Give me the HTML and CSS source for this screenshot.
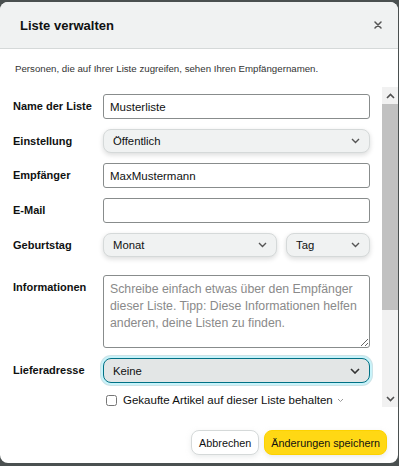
FILE: index.html
```html
<!DOCTYPE html>
<html lang="de">
<head>
    <meta charset="UTF-8">
    <meta name="viewport" content="width=device-width, initial-scale=1.0">
    <title>Liste verwalten</title>
    <link rel="stylesheet" href="styles.css">
</head>
<body>
    <div class="modal">
        <div class="modal-header">
            <h2>Liste verwalten</h2>
            <button type="button" class="btn-close" aria-label="Schließen">
                <svg width="8" height="8" viewBox="0 0 8 8"><path d="M1 1L7 7M7 1L1 7" stroke="#555" stroke-width="1.5" stroke-linecap="round"/></svg>
            </button>
        </div>
        <p class="modal-note">Personen, die auf Ihrer Liste zugreifen, sehen Ihren Empfängernamen.</p>

        <div class="modal-body">
            <form id="listForm">
                <div class="form-row">
                    <label for="listName">Name der Liste</label>
                    <input type="text" id="listName" class="field" value="Musterliste">
                </div>
                <div class="form-row">
                    <label>Einstellung</label>
                    <div class="dropdown">
                        <span>Öffentlich</span>
                        <svg class="chevron" width="9" height="6" viewBox="0 0 9 6"><path d="M1 1l3.5 3.5L8 1" fill="none" stroke="#555" stroke-width="1.4"/></svg>
                    </div>
                </div>
                <div class="form-row">
                    <label for="recipient">Empfänger</label>
                    <input type="text" id="recipient" class="field" value="MaxMustermann">
                </div>
                <div class="form-row">
                    <label for="email">E-Mail</label>
                    <input type="text" id="email" class="field">
                </div>
                <div class="form-row form-row-wide">
                    <label>Geburtstag</label>
                    <div class="date-group">
                        <div class="dropdown">
                            <span>Monat</span>
                            <svg class="chevron" width="9" height="6" viewBox="0 0 9 6"><path d="M1 1l3.5 3.5L8 1" fill="none" stroke="#555" stroke-width="1.4"/></svg>
                        </div>
                        <div class="dropdown">
                            <span>Tag</span>
                            <svg class="chevron" width="9" height="6" viewBox="0 0 9 6"><path d="M1 1l3.5 3.5L8 1" fill="none" stroke="#555" stroke-width="1.4"/></svg>
                        </div>
                    </div>
                </div>
                <div class="form-row">
                    <label for="info">Informationen</label>
                    <textarea id="info" class="field field-area" placeholder="Schreibe einfach etwas über den Empfänger dieser Liste. Tipp: Diese Informationen helfen anderen, deine Listen zu finden."></textarea>
                </div>
                <div class="form-row form-row-tight">
                    <label>Lieferadresse</label>
                    <div class="dropdown dropdown-focus">
                        <span>Keine</span>
                        <svg class="chevron" width="10" height="6" viewBox="0 0 10 6"><path d="M1 1l4 4 4-4" fill="none" stroke="#333" stroke-width="1.6"/></svg>
                    </div>
                </div>
                <div class="form-row">
                    <span></span>
                    <div class="check">
                        <input type="checkbox" id="keepItems">
                        <label for="keepItems">Gekaufte Artikel auf dieser Liste behalten</label>
                        <svg width="7" height="5" viewBox="0 0 7 5"><path d="M1 1l2.5 2.5L6 1" fill="none" stroke="#999" stroke-width="1"/></svg>
                    </div>
                </div>
            </form>

            <!-- Scrollleiste, Inhalt läuft weiter nach unten -->
            <div class="scrollbar">
                <div class="scroll-btn">
                    <svg width="9" height="6" viewBox="0 0 9 6"><path d="M1 5l3.5-3.5L8 5" fill="none" stroke="#505050" stroke-width="1.6"/></svg>
                </div>
                <div class="scroll-thumb"></div>
                <div class="scroll-track"></div>
                <div class="scroll-btn">
                    <svg width="9" height="6" viewBox="0 0 9 6"><path d="M1 1l3.5 3.5L8 1" fill="none" stroke="#505050" stroke-width="1.6"/></svg>
                </div>
            </div>
        </div>

        <div class="modal-footer">
            <button type="button" class="btn btn-cancel">Abbrechen</button>
            <button type="submit" form="listForm" class="btn btn-save">Änderungen speichern</button>
        </div>
    </div>
</body>
</html>
```

FILE: styles.css
```css
:root {
    --text-color: #0f1111;
    --border-color: #888c8c;
    --header-bg: #f0f2f2;
    --accent-yellow: #ffd814;
    --focus-color: #007185;
}

body {
    font-family: 'Liberation Sans', Arial, sans-serif;
    margin: 0;
    padding: 2px 0 0;
    background-color: #4a5050;
    color: var(--text-color);
}

.modal {
    width: 398px;
    height: 461px;
    background: white;
    border-radius: 8px;
    overflow: hidden;
    display: flex;
    flex-direction: column;
}

.modal-header {
    display: flex;
    justify-content: space-between;
    align-items: center;
    height: 46px;
    padding: 0 14px 0 20px;
    background-color: var(--header-bg);
    border-bottom: 1px solid #d5d9d9;
}

.modal-header h2 {
    margin: 0;
    font-size: 13px;
    font-weight: bold;
}

.btn-close {
    border: none;
    background: none;
    padding: 2px;
    display: flex;
    cursor: pointer;
}

.modal-note {
    margin: 0;
    padding: 14px 15px 0;
    height: 24px;
    font-size: 9.7px;
    color: #333;
}

.modal-body {
    height: 320px;
    display: flex;
    overflow: hidden;
}

#listForm {
    flex: 1;
    padding: 7px 12px 0 13px;
}

.form-row {
    display: grid;
    grid-template-columns: 90px 1fr;
    margin-bottom: 10px;
}

.form-row-wide {
    margin-bottom: 18px;
}

.form-row-tight {
    margin-bottom: 11px;
}

.form-row > label {
    font-size: 11px;
    font-weight: bold;
    padding-top: 6px;
}

.field {
    height: 25px;
    box-sizing: border-box;
    border: 1px solid var(--border-color);
    border-radius: 3px;
    padding: 0 6px;
    font-family: inherit;
    font-size: 11.5px;
    color: var(--text-color);
}

.field-area {
    height: 73px;
    padding: 5px 6px;
    font-size: 12.3px;
    line-height: 17px;
    resize: vertical;
}

.field-area::placeholder {
    color: #8a8a8a;
}

.dropdown {
    height: 24px;
    box-sizing: border-box;
    display: flex;
    justify-content: space-between;
    align-items: center;
    padding: 0 9px;
    background-color: var(--header-bg);
    border: 1px solid #d5d9d9;
    border-radius: 8px;
    box-shadow: 0 2px 5px rgba(15, 17, 17, 0.15);
    font-size: 11.3px;
}

.dropdown-focus {
    height: 25px;
    border-color: var(--focus-color);
    box-shadow: 0 0 0 2px #c8f3fa, 0 0 0 3px rgba(0, 113, 133, 0.2);
    background-color: #e3e6e6;
}

.date-group {
    display: grid;
    grid-template-columns: 174px 1fr;
    gap: 9px;
}

.check {
    display: flex;
    align-items: center;
    gap: 4px;
    font-size: 11.5px;
    padding-left: 3px;
}

.check input {
    margin: 0 2px 0 0;
    width: 11px;
    height: 11px;
}

.scrollbar {
    width: 16px;
    display: flex;
    flex-direction: column;
    background-color: #f1f1f1;
}

.scroll-btn {
    height: 17px;
    display: flex;
    justify-content: center;
    align-items: center;
}

.scroll-thumb {
    height: 206px;
    background-color: #c1c1c1;
}

.scroll-track {
    flex: 1;
}

.modal-footer {
    display: flex;
    justify-content: flex-end;
    gap: 5px;
    padding: 23px 11px 0;
}

.btn {
    height: 25px;
    padding: 0 7px;
    border-radius: 8px;
    font-family: inherit;
    font-size: 10.8px;
    color: var(--text-color);
    cursor: pointer;
}

.btn-cancel {
    background: white;
    border: 1px solid #d5d9d9;
    box-shadow: 0 2px 5px rgba(213, 217, 217, 0.5);
}

.btn-save {
    padding: 0 6px;
    background-color: var(--accent-yellow);
    border: 1px solid #fcd200;
    box-shadow: 0 2px 5px rgba(213, 217, 217, 0.5);
}
```
